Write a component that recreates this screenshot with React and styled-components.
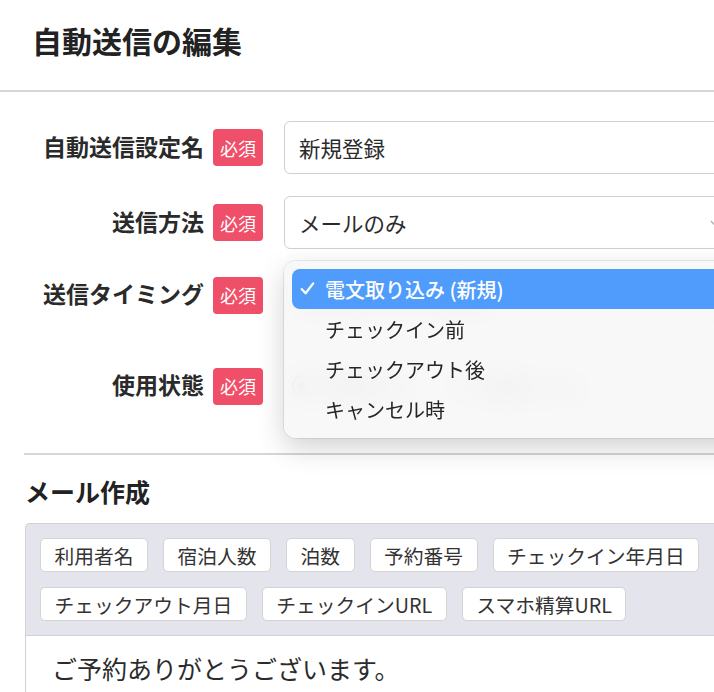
import React from "react";
import styled, { createGlobalStyle } from "styled-components";

const GlobalStyle = createGlobalStyle`
  html, body {
    margin: 0;
    padding: 0;
    overflow: hidden;
    background: #fff;
  }
  body {
    font-family: "Noto Sans CJK JP", "Noto Sans", sans-serif;
    color: #222;
  }
  * {
    box-sizing: border-box;
  }
`;

const Page = styled.div`
  width: 730px;
`;

const Header = styled.header`
  height: 92px;
  border-bottom: 2px solid #d6d6d6;
  display: flex;
  align-items: center;
  padding-left: 32px;

  > h1 {
    margin: -11px 0 0;
    font-size: 30px;
    font-weight: 700;
    line-height: 1;
    color: #222;
  }
`;

const Form = styled.div`
  display: flex;
  flex-direction: column;
  gap: 22px;
  padding-top: 29px;
`;

const Row = styled.div`
  display: flex;
  align-items: center;
  height: ${(p) => p.$height || 53}px;
`;

const LabelCell = styled.div`
  width: 263px;
  margin-right: 21px;
  display: flex;
  justify-content: flex-end;
  align-items: center;
  gap: 9px;
`;

const Label = styled.span`
  font-size: 23px;
  font-weight: 700;
  color: #2a2a2a;
  line-height: 1;
  margin-top: -3px;
`;

const Required = styled.span`
  width: 50px;
  height: 37px;
  border-radius: 4px;
  background: #ef4f68;
  color: #fff;
  font-size: 18px;
  display: flex;
  align-items: center;
  justify-content: center;
`;

const Control = styled.div`
  position: relative;
  flex: 1;
  height: 100%;
  display: flex;
  align-items: center;
`;

const Field = styled.div`
  position: relative;
  width: 100%;
  height: 53px;
  border: 1.5px solid #d0d0d0;
  border-radius: 6px;
  background: #fff;
  padding: 0 14px;
  display: flex;
  align-items: center;
  font-size: 21.5px;
  color: #2b2b2b;
`;

const Chevron = styled.span`
  position: absolute;
  right: 10px;
  top: 50%;
  width: 7px;
  height: 7px;
  margin-top: -5px;
  border-right: 1.5px solid #999;
  border-bottom: 1.5px solid #999;
  transform: rotate(45deg);
`;

const RadioGroup = styled.div`
  display: flex;
  align-items: center;
  gap: 40px;
  padding-left: 8px;
`;

const Radio = styled.label`
  display: flex;
  align-items: center;
  gap: 12px;
  font-size: 21px;
  color: #333;

  &::before {
    content: "";
    width: 18px;
    height: 18px;
    border-radius: 50%;
    border: 2px solid #666;
    background: ${(p) => (p.$checked ? "radial-gradient(#444 40%, #fff 45%)" : "#fff")};
  }
`;

const Menu = styled.div`
  position: absolute;
  z-index: 10;
  top: -10px;
  left: 0;
  width: 500px;
  padding: 8px 0 9px 8px;
  border-radius: 12px;
  background: rgba(247, 247, 247, 0.88);
  backdrop-filter: blur(14px);
  box-shadow: 0 0 0 1px rgba(0, 0, 0, 0.08), 0 10px 28px rgba(0, 0, 0, 0.18);
`;

const MenuItem = styled.div`
  position: relative;
  height: 40px;
  padding-left: 33px;
  display: flex;
  align-items: center;
  border-radius: 8px;
  font-size: 20px;
  font-weight: ${(p) => (p.$selected ? 500 : 400)};
  color: ${(p) => (p.$selected ? "#fff" : "#262626")};
  background: ${(p) => (p.$selected ? "#4f9cfc" : "transparent")};

  > svg {
    position: absolute;
    left: 8px;
    top: 12px;
  }
`;

const Divider = styled.hr`
  margin: 22px 0 0 24px;
  border: 0;
  border-top: 2px solid #d6d6d6;
`;

const MailSection = styled.section`
  padding-left: 25px;

  > h2 {
    margin: 18px 0 14px;
    font-size: 25px;
    font-weight: 700;
    line-height: 36px;
    color: #222;
  }
`;

const TagPanel = styled.div`
  display: flex;
  flex-wrap: wrap;
  gap: 15px;
  padding: 14px 0 14px 14px;
  background: #e4e5ec;
  border: 1.5px solid #d2d2d4;
  border-right: 0;
  border-radius: 5px 0 0 0;
`;

const Tag = styled.span`
  height: 34px;
  padding: 0 13.5px;
  border: 1px solid #d4d4d4;
  border-radius: 5px;
  background: #fff;
  display: flex;
  align-items: center;
  font-size: 19.75px;
  color: #333;
`;

const Editor = styled.div`
  border-left: 1.5px solid #d2d2d4;
  padding: 14px 26px;
  font-size: 25px;
  line-height: 36px;
  color: #2b2b2b;
`;

const timings = ["電文取り込み (新規)", "チェックイン前", "チェックアウト後", "キャンセル時"];
const tags = [
  "利用者名",
  "宿泊人数",
  "泊数",
  "予約番号",
  "チェックイン年月日",
  "チェックアウト月日",
  "チェックインURL",
  "スマホ精算URL",
];

const Check = () => (
  <svg width="15" height="15" viewBox="0 0 15 15">
    <path d="M1.8 8.2 L5.6 12.2 L13.2 2.4" fill="none" stroke="#fff" strokeWidth="2.3" strokeLinecap="round" strokeLinejoin="round" />
  </svg>
);

const FieldLabel = ({ children }) => (
  <LabelCell>
    <Label>{children}</Label>
    <Required>必須</Required>
  </LabelCell>
);

export default function App() {
  return (
    <Page>
      <GlobalStyle />
      <Header>
        <h1>自動送信の編集</h1>
      </Header>

      <Form>
        <Row>
          <FieldLabel>自動送信設定名</FieldLabel>
          <Control>
            <Field>新規登録</Field>
          </Control>
        </Row>
        <Row>
          <FieldLabel>送信方法</FieldLabel>
          <Control>
            <Field>
              メールのみ
              <Chevron />
            </Field>
          </Control>
        </Row>
        <Row $height={48}>
          <FieldLabel>送信タイミング</FieldLabel>
          <Control>
            <Field>
              電文取り込み (新規)
              <Chevron />
            </Field>
            <Menu>
              {timings.map((t, i) => (
                <MenuItem key={t} $selected={i === 0}>
                  {i === 0 && <Check />}
                  {t}
                </MenuItem>
              ))}
            </Menu>
          </Control>
        </Row>
        <Row $height={90}>
          <FieldLabel>使用状態</FieldLabel>
          <Control>
            <RadioGroup>
              <Radio $checked>使用する</Radio>
              <Radio>使用しない</Radio>
            </RadioGroup>
          </Control>
        </Row>
      </Form>

      <Divider />

      <MailSection>
        <h2>メール作成</h2>
        <TagPanel>
          {tags.map((t) => (
            <Tag key={t}>{t}</Tag>
          ))}
        </TagPanel>
        <Editor>ご予約ありがとうございます。</Editor>
      </MailSection>
    </Page>
  );
}
